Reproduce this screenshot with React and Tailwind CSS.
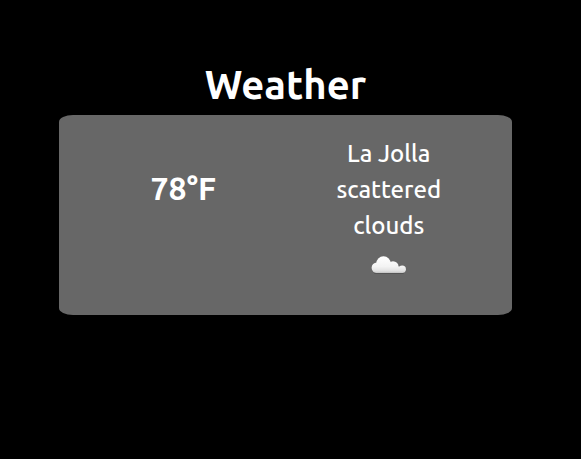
function CloudIcon() {
  return (
    <svg viewBox="0 0 36 18" className="h-[18px] w-9" role="img" aria-label="Cloud">
      <defs>
        <linearGradient id="cloud" gradientUnits="userSpaceOnUse" x1="0" y1="1" x2="0" y2="17">
          <stop offset="0" stopColor="#ffffff" />
          <stop offset="0.6" stopColor="#f3f3f3" />
          <stop offset="0.88" stopColor="#e0e0e0" />
          <stop offset="1" stopColor="#c0c0c0" />
        </linearGradient>
      </defs>
      <rect x="3" y="16" width="30" height="2" rx="1" fill="#555555" />
      <g fill="url(#cloud)">
        <circle cx="5.8" cy="11.8" r="5.2" />
        <circle cx="12.5" cy="7.6" r="7.3" />
        <circle cx="22" cy="10.8" r="5.6" />
        <circle cx="31.2" cy="13.3" r="3.7" />
        <path d="M5 17V11L12 8H22L27 10.5Q29 10 32 12V17z" />
      </g>
    </svg>
  );
}

export default function App() {
  return (
    <main className="min-h-screen bg-black pt-[54px] pr-[69px] pl-[59px] font-[Ubuntu,'Noto_Sans',sans-serif] text-white">
      <h1 className="text-center text-[40px] leading-[61px] font-semibold">Weather</h1>
      <section className="grid min-h-[200px] grid-cols-2 rounded-[14px/7px] bg-[#676767] px-6 py-5 text-center">
        <p className="pt-8 pr-0.5 text-[32px] leading-[42px] font-semibold">78°F</p>
        <div className="flex flex-col items-center pt-px pr-8 pl-9 text-2xl leading-9">
          <p className="font-medium">La Jolla</p>
          <p className="font-medium">scattered clouds</p>
          <div className="pt-3">
            <CloudIcon />
          </div>
        </div>
      </section>
    </main>
  );
}
